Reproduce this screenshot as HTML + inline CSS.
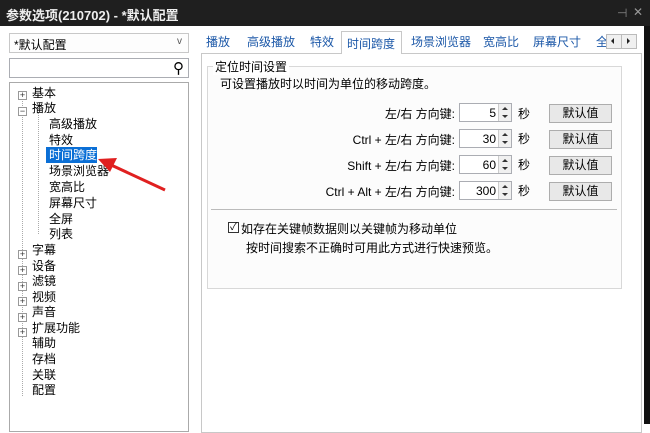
<!DOCTYPE html>
<html><head><meta charset="utf-8"><style>
*{margin:0;padding:0;box-sizing:border-box}
body{width:650px;height:424px;overflow:hidden;background:#fff;font-family:"Liberation Sans","Noto Sans CJK SC",sans-serif;font-size:12px;color:#000;position:relative}
.a{position:absolute;white-space:nowrap}
.title{left:0;top:0;width:650px;height:26px;background:#1f1f1f;color:#eee;font-size:13px;font-weight:bold;padding:5px 0 0 6px}
.box{border:1px solid #abadb3;background:#fff}
.tab{top:33px;color:#1c58a8;font-size:12px}
.lab{right:195px;font-size:12px}
.inp{left:459px;width:53px;height:19px;border:1px solid #abadb3;background:#fff;text-align:right;padding:2px 15px 0 0;font-size:12px}
.sp{position:absolute;right:0;top:0;width:13px;height:17px;border-left:1px solid #ccc;background:#f0f0f0}
.sp:before{content:"";position:absolute;left:3px;top:3px;border:3px solid transparent;border-bottom:3px solid #333;border-top:0}
.sp:after{content:"";position:absolute;left:3px;top:11px;border:3px solid transparent;border-top:3px solid #333;border-bottom:0}
.btn{left:549px;width:63px;height:19px;border:1px solid #adadad;background:#e8e8e8;text-align:center;padding-top:1px;line-height:15px}
.t{font-size:12px}
.pm{position:absolute;width:9px;height:9px;border:1px solid #999;background:#fff;font-size:9px;line-height:7px;text-align:center;color:#333}
</style></head><body>
<div class="a title">参数选项(210702) - *默认配置</div>
<div class="a" style="left:617px;top:6px;color:#888;font-size:12px">⊣</div>
<div class="a" style="left:633px;top:5px;color:#999;font-size:12px">✕</div>
<div class="a" style="left:644px;top:26px;width:6px;height:398px;background:#111"></div>

<div class="a box" style="left:9px;top:33px;width:180px;height:20px;padding:2px 4px;border-color:#c8c8c8;background:#fdfdfd">*默认配置<span style="position:absolute;right:6px;top:2px;font-size:10px;color:#555">v</span></div>
<div class="a box" style="left:9px;top:58px;width:180px;height:20px"><span style="position:absolute;right:4px;top:0px;font-size:15px">⚲</span></div>
<div class="a box" style="left:9px;top:82px;width:180px;height:350px;border-color:#aaa"></div>

<div class="a" style="left:22px;top:96px;height:300px;border-left:1px dotted #aaa"></div>
<div class="a" style="left:38px;top:112px;height:122px;border-left:1px dotted #aaa"></div>
<div class="pm" style="left:18px;top:91px">+</div>
<div class="pm" style="left:18px;top:107px">−</div>
<div class="pm" style="left:18px;top:250px">+</div>
<div class="pm" style="left:18px;top:266px">+</div>
<div class="pm" style="left:18px;top:282px">+</div>
<div class="pm" style="left:18px;top:297px">+</div>
<div class="pm" style="left:18px;top:313px">+</div>
<div class="pm" style="left:18px;top:328px">+</div>
<div class="a t" style="left:32px;top:84px">基本</div>
<div class="a t" style="left:32px;top:99px">播放</div>
<div class="a t" style="left:49px;top:115px">高级播放</div>
<div class="a t" style="left:49px;top:131px">特效</div>
<div class="a" style="left:46px;top:147px;width:51px;height:16px;background:#0a6fd6"></div>
<div class="a t" style="left:49px;top:146px;color:#fff">时间跨度</div>
<div class="a t" style="left:49px;top:162px">场景浏览器</div>
<div class="a t" style="left:49px;top:178px">宽高比</div>
<div class="a t" style="left:49px;top:194px">屏幕尺寸</div>
<div class="a t" style="left:49px;top:210px">全屏</div>
<div class="a t" style="left:49px;top:225px">列表</div>
<div class="a t" style="left:32px;top:241px">字幕</div>
<div class="a t" style="left:32px;top:257px">设备</div>
<div class="a t" style="left:32px;top:272px">滤镜</div>
<div class="a t" style="left:32px;top:288px">视频</div>
<div class="a t" style="left:32px;top:303px">声音</div>
<div class="a t" style="left:32px;top:319px">扩展功能</div>
<div class="a t" style="left:32px;top:334px">辅助</div>
<div class="a t" style="left:32px;top:350px">存档</div>
<div class="a t" style="left:32px;top:366px">关联</div>
<div class="a t" style="left:32px;top:381px">配置</div>

<svg class="a" style="left:95px;top:150px" width="80" height="45"><line x1="70" y1="40" x2="14" y2="14" stroke="#e02020" stroke-width="3"/><polygon points="3,9 22,8 15,22" fill="#e02020"/></svg>

<div class="a" style="left:201px;top:53px;width:441px;height:380px;border:1px solid #c8c8c8;background:#fff"></div>
<div class="a" style="left:341px;top:31px;width:61px;height:23px;border:1px solid #c8c8c8;border-bottom:none;background:#fff"></div>
<div class="a tab" style="left:206px">播放</div>
<div class="a tab" style="left:247px">高级播放</div>
<div class="a tab" style="left:310px">特效</div>
<div class="a tab" style="left:347px;top:35px">时间跨度</div>
<div class="a tab" style="left:411px">场景浏览器</div>
<div class="a tab" style="left:483px">宽高比</div>
<div class="a tab" style="left:533px">屏幕尺寸</div>
<div class="a tab" style="left:596px">全</div>
<div class="a" style="left:606px;top:34px;width:31px;height:15px;border:1px solid #bbb;background:#f0f0f0"></div>
<div class="a" style="left:621px;top:35px;width:1px;height:13px;background:#bbb"></div>
<div class="a" style="left:611px;top:38px;border:3px solid transparent;border-right:3px solid #222;border-left:0"></div>
<div class="a" style="left:627px;top:38px;border:3px solid transparent;border-left:3px solid #222;border-right:0"></div>

<div class="a" style="left:207px;top:66px;width:415px;height:223px;border:1px solid #d8d8d8;background:#fcfcfc"></div>
<div class="a" style="left:213px;top:58px;background:#fff;padding:0 2px">定位时间设置</div>
<div class="a" style="left:220px;top:75px">可设置播放时以时间为单位的移动跨度。</div>

<div class="a lab" style="top:105px">左/右 方向键:</div>
<div class="a inp" style="top:103px">5<div class="sp"></div></div>
<div class="a" style="left:518px;top:105px">秒</div>
<div class="a btn" style="top:104px">默认值</div>

<div class="a lab" style="top:131px">Ctrl + 左/右 方向键:</div>
<div class="a inp" style="top:129px">30<div class="sp"></div></div>
<div class="a" style="left:518px;top:130px">秒</div>
<div class="a btn" style="top:130px">默认值</div>

<div class="a lab" style="top:157px">Shift + 左/右 方向键:</div>
<div class="a inp" style="top:155px">60<div class="sp"></div></div>
<div class="a" style="left:518px;top:156px">秒</div>
<div class="a btn" style="top:156px">默认值</div>

<div class="a lab" style="top:183px">Ctrl + Alt + 左/右 方向键:</div>
<div class="a inp" style="top:181px">300<div class="sp"></div></div>
<div class="a" style="left:518px;top:182px">秒</div>
<div class="a btn" style="top:182px">默认值</div>

<div class="a" style="left:211px;top:209px;width:406px;height:1px;background:#bbb"></div>
<div class="a" style="left:228px;top:222px;width:11px;height:11px;border:1px solid #333;background:#fff;font-size:10px;line-height:9px;text-align:center">✓</div>
<div class="a" style="left:241px;top:220px">如存在关键帧数据则以关键帧为移动单位</div>
<div class="a" style="left:246px;top:239px">按时间搜索不正确时可用此方式进行快速预览。</div>
</body></html>
